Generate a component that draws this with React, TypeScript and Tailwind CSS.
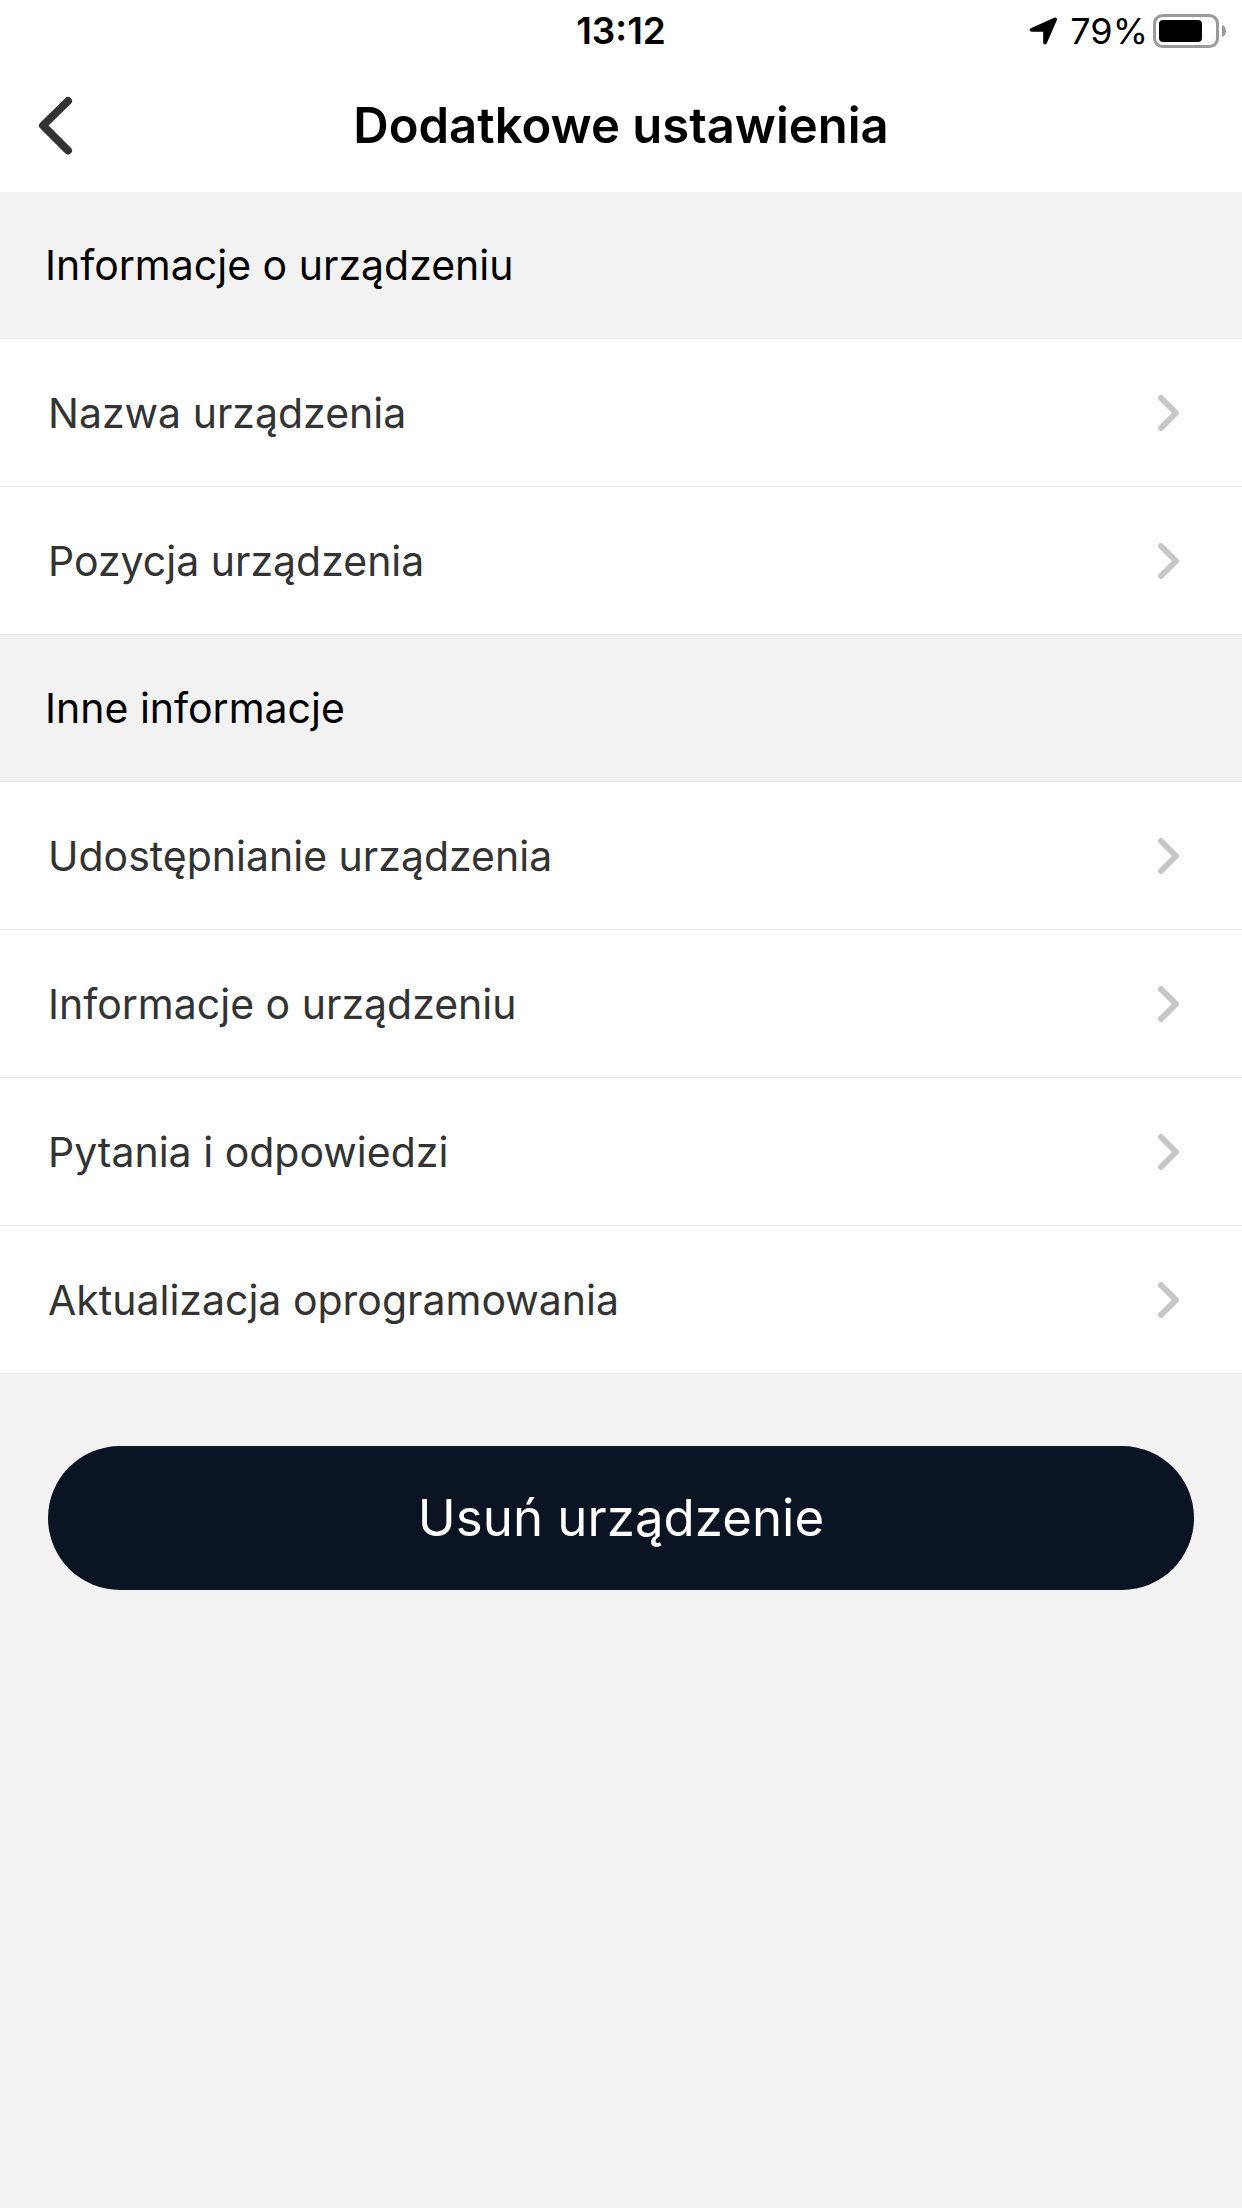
import type { ReactNode } from 'react';

const deviceItems = ['Nazwa urządzenia', 'Pozycja urządzenia'];

const otherItems = [
  'Udostępnianie urządzenia',
  'Informacje o urządzeniu',
  'Pytania i odpowiedzi',
  'Aktualizacja oprogramowania',
];

function StatusBar() {
  return (
    <div className="grid grid-cols-3 items-center h-[60px] px-[15px] text-[36px] leading-[62px] text-black">
      <span className="col-start-2 text-center text-[37px] font-semibold">13:12</span>
      <div className="flex items-center justify-end">
        {/* Location arrow */}
        <svg className="mr-3" width="29" height="28" viewBox="0 0 29 28" fill="currentColor" aria-hidden="true">
          <path d="M1.8 11.2 25.2 0.8C27 0 28.6 1.4 27.8 3.3L17.8 26.2C16.9 28.2 14.2 27.7 14.2 25.6V14.8H2.8C0.6 14.8 -0.3 12.1 1.8 11.2Z" />
        </svg>
        <span>79%</span>
        {/* Battery */}
        <svg className="ml-[5px]" width="74" height="34" viewBox="0 0 74 34" aria-hidden="true">
          <rect x="1.5" y="1.5" width="63" height="31" rx="8" fill="none" stroke="#9a9a9a" strokeWidth="3" />
          <rect x="6" y="6" width="43" height="22" rx="4" fill="#000" />
          <path d="M69 11C71.5 12 73 14.2 73 17S71.5 22 69 23Z" fill="#9a9a9a" />
        </svg>
      </div>
    </div>
  );
}

function Header() {
  return (
    <header className="grid grid-cols-[96px_1fr_96px] items-center h-[132px]">
      <button type="button" aria-label="Wstecz" className="flex items-center h-full pl-9">
        <svg width="40" height="60" viewBox="0 0 40 60" fill="none" stroke="#333" strokeWidth="8" strokeLinecap="round" strokeLinejoin="round">
          <path d="M32 5 7 29.5 32 54.5" />
        </svg>
      </button>
      <h1 className="text-center text-[49px] leading-[60px] font-semibold text-black">Dodatkowe ustawienia</h1>
    </header>
  );
}

function Section({ title, children }: { title: string; children: ReactNode }) {
  return (
    <section>
      <h2 className="flex items-center h-[147px] pl-[45px] text-[41px] leading-[54px] text-black border-b border-[#e5e5e5]">
        {title}
      </h2>
      <ul className="bg-white">{children}</ul>
    </section>
  );
}

function Row({ label }: { label: string }) {
  return (
    <li className="border-b border-[#e5e5e5]">
      <button type="button" className="flex items-center justify-between w-full h-[147px] pl-12 pr-[60px] text-left text-[41px] leading-[54px] text-[#333]">
        <span>{label}</span>
        <svg width="26" height="38" viewBox="0 0 26 38" fill="none" stroke="#c7c7c9" strokeWidth="6" strokeLinecap="round" strokeLinejoin="round" aria-hidden="true">
          <path d="M5 4 20 19 5 34" />
        </svg>
      </button>
    </li>
  );
}

export default function App() {
  return (
    <div className="min-h-screen bg-[#f2f2f2] font-['Inter',sans-serif]">
      <div className="bg-white">
        <StatusBar />
        <Header />
      </div>

      <main>
        <Section title="Informacje o urządzeniu">
          {deviceItems.map((label) => (
            <Row key={label} label={label} />
          ))}
        </Section>
        <Section title="Inne informacje">
          {otherItems.map((label) => (
            <Row key={label} label={label} />
          ))}
        </Section>

        <div className="px-12 pt-[72px]">
          <button type="button" className="w-full h-[144px] rounded-full bg-[#0a1422] text-[51px] leading-[60px] text-white">
            Usuń urządzenie
          </button>
        </div>
      </main>
    </div>
  );
}
